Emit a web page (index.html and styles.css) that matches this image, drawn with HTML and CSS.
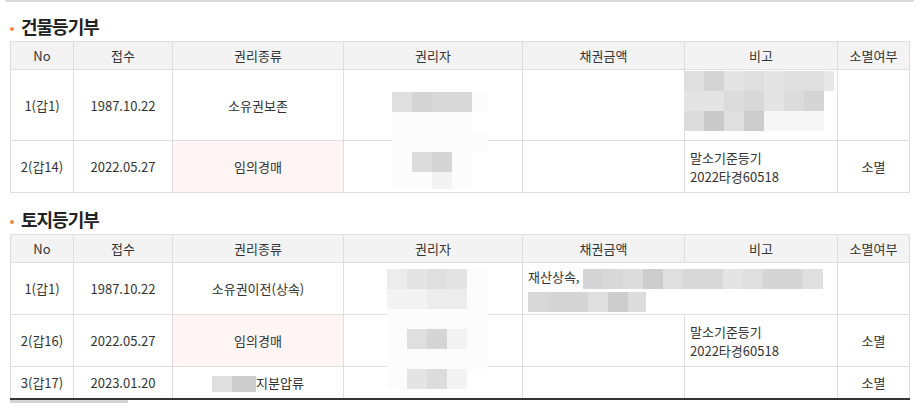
FILE: index.html
```html
<!DOCTYPE html>
<html lang="ko">
<head>
<meta charset="utf-8">
<title>등기부</title>
<link rel="stylesheet" href="styles.css">
</head>
<body>
<div class="topbar"></div>
<div class="page">
  <h2 class="title"><span class="dot"></span>건물등기부</h2>
  <div class="tblwrap">
    <table class="reg">
      <colgroup>
        <col class="c-no"><col class="c-date"><col class="c-kind"><col class="c-owner"><col class="c-amt"><col class="c-note"><col class="c-end">
      </colgroup>
      <thead>
        <tr class="r-head"><th>No</th><th>접수</th><th>권리종류</th><th>권리자</th><th>채권금액</th><th>비고</th><th>소멸여부</th></tr>
      </thead>
      <tbody>
        <tr class="r-tall"><td>1(갑1)</td><td>1987.10.22</td><td>소유권보존</td><td></td><td></td><td></td><td></td></tr>
        <tr class="r-two"><td>2(갑14)</td><td>2022.05.27</td><td class="hl">임의경매</td><td></td><td></td><td class="left">말소기준등기<br>2022타경60518</td><td>소멸</td></tr>
      </tbody>
    </table>
    <div class="blur blur-a">
      <span class="s6"></span><span class="s3"></span><span class="s4"></span><span class="s4"></span><span class="s12"></span>
      <span class="s12"></span><span class="s12"></span><span class="s12"></span><span class="s12"></span><span class="s0"></span>
      <span class="s12"></span><span class="s12"></span><span class="s12"></span><span class="s12"></span><span class="s12"></span>
      <span class="s12"></span><span class="s5"></span><span class="s3"></span><span class="s12"></span><span class="s0"></span>
      <span class="s12"></span><span class="s12"></span><span class="s10"></span><span class="s12"></span><span class="s0"></span>
    </div>
    <div class="blur blur-b">
      <span class="s6"></span><span class="s3"></span><span class="s7"></span><span class="s6"></span><span class="s7"></span><span class="s6"></span><span class="s6"></span><span class="s8"></span>
      <span class="s7"></span><span class="s7"></span><span class="s5"></span><span class="s4"></span><span class="s7"></span><span class="s5"></span><span class="s3"></span><span class="s0"></span>
      <span class="s5"></span><span class="s1"></span><span class="s6"></span><span class="s2"></span><span class="s11"></span><span class="s11"></span><span class="s11"></span><span class="s0"></span>
    </div>
  </div>

  <h2 class="title title-2"><span class="dot"></span>토지등기부</h2>
  <div class="tblwrap">
    <table class="reg reg-last">
      <colgroup>
        <col class="c-no"><col class="c-date"><col class="c-kind"><col class="c-owner"><col class="c-amt"><col class="c-note"><col class="c-end">
      </colgroup>
      <thead>
        <tr class="r-head"><th>No</th><th>접수</th><th>권리종류</th><th>권리자</th><th>채권금액</th><th>비고</th><th>소멸여부</th></tr>
      </thead>
      <tbody>
        <tr class="r-two"><td>1(갑1)</td><td>1987.10.22</td><td>소유권이전(상속)</td><td></td>
          <td colspan="2" class="left amt">재산상속, <span class="iblur w12"><span class="s3"></span><span class="s4"></span><span class="s5"></span><span class="s2"></span><span class="s6"></span><span class="s4"></span><span class="s4"></span><span class="s7"></span><span class="s6"></span><span class="s3"></span><span class="s3"></span><span class="s6"></span></span> <span class="iblur"><span class="s4"></span><span class="s3"></span><span class="s3"></span><span class="s6"></span><span class="s2"></span><span class="s5 narrow"></span></span></td>
          <td></td></tr>
        <tr class="r-two"><td>2(갑16)</td><td>2022.05.27</td><td class="hl">임의경매</td><td></td><td></td><td class="left">말소기준등기<br>2022타경60518</td><td>소멸</td></tr>
        <tr class="r-one"><td>3(갑17)</td><td>2023.01.20</td><td><span class="iblur small"><span class="s6"></span><span class="s2 wide"></span></span>지분압류</td><td></td><td></td><td></td><td>소멸</td></tr>
      </tbody>
    </table>
    <div class="blur blur-c">
      <span class="s9"></span><span class="s7"></span><span class="s6"></span><span class="s7"></span><span class="s12"></span>
      <span class="s10"></span><span class="s10"></span><span class="s9"></span><span class="s9"></span><span class="s12"></span>
      <span class="s12"></span><span class="s12"></span><span class="s12"></span><span class="s12"></span><span class="s12"></span>
      <span class="s12"></span><span class="s6"></span><span class="s3"></span><span class="s10"></span><span class="s12"></span>
      <span class="s12"></span><span class="s12"></span><span class="s12"></span><span class="s12"></span><span class="s12"></span>
      <span class="s12"></span><span class="s7"></span><span class="s5"></span><span class="s10"></span><span class="s0"></span>
    </div>
  </div>
  <div class="thumb"></div>
</div>
</body>
</html>
```

FILE: styles.css
```css
html, body {
  margin: 0;
  padding: 0;
  background: #fff;
}
body {
  font-family: "Noto Sans CJK KR", "Noto Sans", sans-serif;
  font-size: 13px;
  color: #333;
}
.topbar {
  height: 0;
  margin: 0 5px;
  border-bottom: 2px solid #d9d9d9;
  border-radius: 0 0 4px 4px;
}
.page {
  padding: 0 10px;
}
.title {
  margin: 0;
  height: 39px;
  box-sizing: border-box;
  display: flex;
  align-items: flex-end;
  gap: 7px;
  padding: 0 0 3px 0;
  font-size: 18px;
  font-weight: 700;
  line-height: 24px;
  letter-spacing: -1px;
  color: #222;
}
.title-2 {
  height: 41px;
}
.dot {
  flex: none;
  width: 4px;
  height: 4px;
  border-radius: 50%;
  background: #f0883c;
  margin-bottom: 7px;
}
.tblwrap {
  position: relative;
  width: 899px;
}
.reg {
  width: 899px;
  border-collapse: collapse;
  table-layout: fixed;
  border-top: 1px solid #333;
}
.reg-last {
  border-bottom: 2px solid #333;
}
.c-no { width: 63px; }
.c-date { width: 99px; }
.c-kind { width: 171px; }
.c-owner { width: 179px; }
.c-amt { width: 162px; }
.c-note { width: 153px; }
.c-end { width: 72px; }
.reg th, .reg td {
  border: 1px solid #dedede;
  text-align: center;
  padding: 0 5px;
  line-height: 19px;
  white-space: nowrap;
}
.reg th {
  background: #f3f3f3;
  font-weight: 400;
}
.reg td.left {
  text-align: left;
  white-space: normal;
}
.reg td.amt {
  padding-left: 5px;
  line-height: 23px;
}
.reg td.hl {
  background: #fff5f5;
}
.r-head { height: 28px; }
.r-tall { height: 71px; }
.r-two { height: 52px; }
.r-one { height: 32px; }

.blur {
  position: absolute;
  display: grid;
  grid-auto-rows: 20px;
}
.blur-a {
  left: 382px;
  top: 51px;
  grid-template-columns: repeat(4, 20px) 16px;
  grid-template-rows: repeat(4, 20px) 17px;
}
.blur-b {
  left: 674px;
  top: 30px;
  grid-template-columns: repeat(7, 20px) 10px;
}
.blur-c {
  left: 377px;
  top: 35px;
  grid-template-columns: repeat(4, 20px) 21px;
}
.iblur {
  display: inline-flex;
  vertical-align: middle;
  height: 20px;
}
.iblur > span {
  width: 20px;
  height: 20px;
}
.iblur > span.narrow { width: 18px; }
.iblur.small { height: 16px; }
.iblur.small > span { height: 16px; }
.iblur.small > span.wide { width: 24px; }

.s0 { background: transparent; }
.s1 { background: #c9c9c9; }
.s2 { background: #cdcdcd; }
.s3 { background: #d5d5d5; }
.s4 { background: #d8d8d8; }
.s5 { background: #dcdcdc; }
.s6 { background: #dfdfdf; }
.s7 { background: #e4e4e4; }
.s8 { background: #e8e8e8; }
.s9 { background: #ececec; }
.s10 { background: #f3f3f3; }
.s11 { background: #f7f7f7; }
.s12 { background: #fcfcfc; }

.thumb {
  width: 118px;
  height: 3px;
  background: #d4d4d4;
}
```
